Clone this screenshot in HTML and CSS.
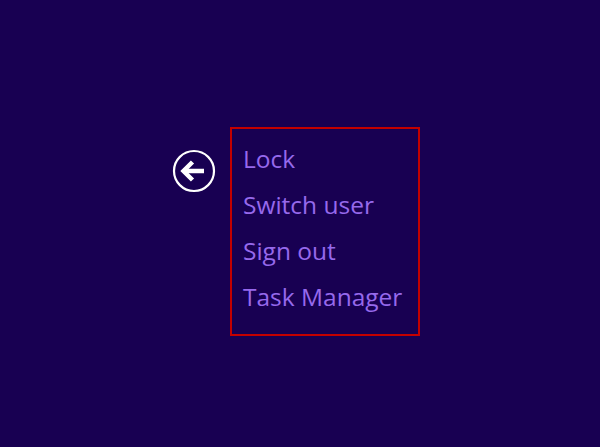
FILE: index.html
```html
<!DOCTYPE html>
<html>
<head>
<meta charset="utf-8">
<link rel="stylesheet" href="styles.css">
</head>
<body>
<div class="screen">
  <div class="back">
    <svg width="44" height="44" viewBox="0 0 44 44">
      <circle cx="22" cy="22" r="20" fill="none" stroke="#fff" stroke-width="2.2"/>
      <path d="M11 22 H32" stroke="#fff" stroke-width="4.5" fill="none"/>
      <path d="M20.5 13 L11.5 22 L20.5 31" stroke="#fff" stroke-width="4.5" fill="none" stroke-linejoin="miter"/>
    </svg>
  </div>
  <ul class="menu">
    <li>Lock</li>
    <li>Switch user</li>
    <li>Sign out</li>
    <li>Task Manager</li>
  </ul>
</div>
</body>
</html>
```
FILE: styles.css
```css
html, body {
  margin: 0;
  padding: 0;
  height: 100%;
  background: #180052;
}
.screen {
  display: flex;
  align-items: flex-start;
  padding: 127px 0 0 172px;
  gap: 14px;
  font-family: "Open Sans", "Noto Sans", sans-serif;
}
.back {
  margin-top: 22px;
  width: 44px;
  height: 44px;
}
.back svg { display: block; }
.menu {
  list-style: none;
  margin: 0;
  width: 186px;
  height: 198px;
  padding: 7px 0 0 0;
  border: 2px solid #c40000;
  box-sizing: content-box;
}
.menu li {
  height: 46px;
  line-height: 46px;
  padding-left: 11px;
  font-size: 24.5px;
  font-weight: 400;
  color: #9669ec;
  white-space: nowrap;
}
```
